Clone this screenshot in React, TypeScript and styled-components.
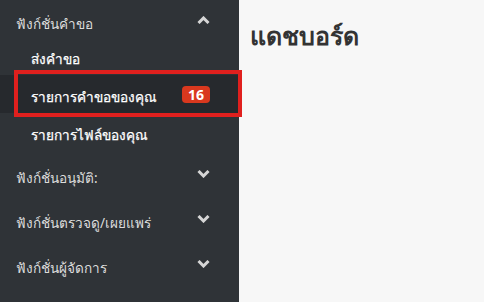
import styled, { createGlobalStyle } from "styled-components";

const Global = createGlobalStyle`
  html, body {
    margin: 0;
    padding: 0;
    background: #f7f7f7;
  }
  body {
    font-family: "Noto Sans", "DejaVu Sans", sans-serif;
  }
`;

const Page = styled.div`
  display: flex;
  width: 484px;
  height: 302px;
  overflow: hidden;
`;

const Sidebar = styled.nav`
  width: 239px;
  flex-shrink: 0;
  background: #2f3337;
  display: flex;
  flex-direction: column;
`;

const GroupHeader = styled.div<{ $h: number }>`
  height: ${(p) => p.$h}px;
  display: flex;
  align-items: center;
  justify-content: space-between;
  padding: 0 29px 0 16px;
  color: #dcdcdc;
  font-size: 13.6px;
`;

const Label = styled.span<{ $shift: number }>`
  margin-top: ${(p) => p.$shift * 2}px;
`;

const SubItem = styled.div<{ $active?: boolean }>`
  position: relative;
  height: 38px;
  display: flex;
  align-items: center;
  justify-content: space-between;
  padding: 5px 29px 0 31px;
  box-sizing: border-box;
  color: #ffffff;
  font-size: 13.6px;
  font-weight: 500;
  -webkit-text-stroke: 0.25px #ffffff;
  background: ${(p) => (p.$active ? "#26292d" : "transparent")};
`;

const Highlight = styled.div`
  position: absolute;
  left: 14px;
  right: -3px;
  top: -5px;
  bottom: -4px;
  border: 4px solid #e0201e;
  pointer-events: none;
`;

const Badge = styled.span`
  background: #d9381e;
  color: #fff;
  font-size: 14px;
  font-weight: bold;
  -webkit-text-stroke: 0;
  border-radius: 4px;
  width: 28px;
  height: 17px;
  margin-top: -4px;
  display: flex;
  align-items: center;
  justify-content: center;
`;

const Chevron = styled.svg<{ $shift: number }>`
  width: 13px;
  height: 8px;
  margin-top: ${(p) => p.$shift * 2}px;
  fill: none;
  stroke: #d6d6d6;
  stroke-width: 3;
`;

const Main = styled.main`
  flex: 1;
  padding: 16px 11px;
`;

const Title = styled.h1`
  margin: 0;
  font-size: 25px;
  font-weight: bold;
  color: #333;
`;

function Arrow({ up, shift = 0 }: { up?: boolean; shift?: number }) {
  return (
    <Chevron viewBox="0 0 13 8" $shift={shift}>
      <polyline points={up ? "1.5,7 6.5,2 11.5,7" : "1.5,1 6.5,6 11.5,1"} />
    </Chevron>
  );
}

const groups = ["ฟังก์ชั่นอนุมัติ:", "ฟังก์ชั่นตรวจดู/เผยแพร่", "ฟังก์ชั่นผู้จัดการ"];

export default function App() {
  return (
    <Page>
      <Global />
      <Sidebar>
        <GroupHeader $h={37}>
          <Label $shift={5}>ฟังก์ชั่นคำขอ</Label>
          <Arrow up shift={1.5} />
        </GroupHeader>
        <SubItem>ส่งคำขอ</SubItem>
        <SubItem $active>
          รายการคำขอของคุณ
          <Badge>16</Badge>
          <Highlight />
        </SubItem>
        <SubItem>รายการไฟล์ของคุณ</SubItem>
        {groups.map((g) => (
          <GroupHeader key={g} $h={45}>
            <Label $shift={4}>{g}</Label>
            <Arrow />
          </GroupHeader>
        ))}
      </Sidebar>
      <Main>
        <Title>แดชบอร์ด</Title>
      </Main>
    </Page>
  );
}
